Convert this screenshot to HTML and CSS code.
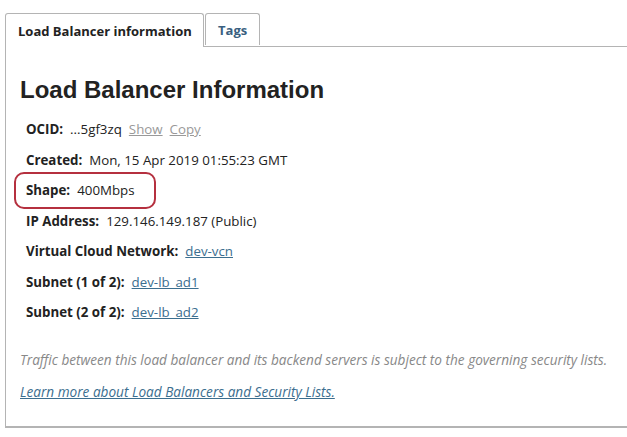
FILE: index.html
```html
<!DOCTYPE html>
<html>
<head>
<meta charset="utf-8">
<link rel="stylesheet" href="styles.css">
</head>
<body>
<div class="tabs">
  <div class="tab active">Load Balancer information</div>
  <div class="tab">Tags</div>
</div>
<div class="panel">
  <h1 class="title">Load Balancer Information</h1>
  <div class="rows">
    <div class="row"><span class="label">OCID:</span><span>...5gf3zq</span><a class="muted">Show</a><a class="muted">Copy</a></div>
    <div class="row"><span class="label">Created:</span><span>Mon, 15 Apr 2019 01:55:23 GMT</span></div>
    <div class="row highlight"><span class="label">Shape:</span><span>400Mbps</span></div>
    <div class="row"><span class="label">IP Address:</span><span>129.146.149.187 (Public)</span></div>
    <div class="row"><span class="label">Virtual Cloud Network:</span><a class="link">dev-vcn</a></div>
    <div class="row"><span class="label">Subnet (1 of 2):</span><a class="link">dev-lb_ad1</a></div>
    <div class="row"><span class="label">Subnet (2 of 2):</span><a class="link">dev-lb_ad2</a></div>
  </div>
  <p class="note">Traffic between this load balancer and its backend servers is subject to the governing security lists.</p>
  <p class="more"><a class="link">Learn more about Load Balancers and Security Lists.</a></p>
</div>
</body>
</html>
```
FILE: styles.css
```css
html, body { margin: 0; padding: 0; background: #fff; }
body { font-family: "Open Sans", "Noto Sans", sans-serif; color: #222; }
.tabs { display: flex; padding-left: 5px; margin-top: 13px; }
.tab {
  height: 32px; box-sizing: border-box; border: 1px solid #b4b4b4; border-bottom: none;
  border-radius: 3px 3px 0 0; font-size: 13px; font-weight: 700; color: #3a5f7f;
  display: flex; align-items: center; padding: 0 12px; background: #fff;
  margin-right: 1px; white-space: nowrap;
}
.tab.active { color: #222; width: 199px; position: relative; z-index: 1; height: 34px; margin-bottom: -1px; }
.panel {
  border-top: 1px solid #b4b4b4; border-left: 1px solid #b4b4b4; border-bottom: 2px solid #b4b4b4;
  margin-left: 5px; height: 382px; box-sizing: border-box; padding: 0 0 0 14px;
}
.title { font-family: "Liberation Sans", Arial, sans-serif; font-size: 24px; font-weight: 700; margin: 29px 0 0; line-height: 28px; color: #222; }
.rows { display: flex; flex-direction: column; margin-top: 10px; }
.row { display: flex; gap: 7px; align-items: center; height: 30.5px; font-size: 13.3px; padding-left: 6px; white-space: nowrap; }
.label { font-weight: 700; }
.muted { color: #999; text-decoration: underline; }
.link { color: #3b6e8f; text-decoration: underline; }
.highlight { border: 2px solid #b5303f; border-radius: 10px; margin-left: -6px; padding-left: 10px; width: 142px; box-sizing: border-box; height: 37px; margin-top: -3.5px; margin-bottom: -3px; }
.note { font-style: italic; color: #888; font-size: 13.6px; margin: 22px 0 0; white-space: nowrap; }
.more { font-style: italic; font-size: 13.6px; margin: 13px 0 0; }
```
